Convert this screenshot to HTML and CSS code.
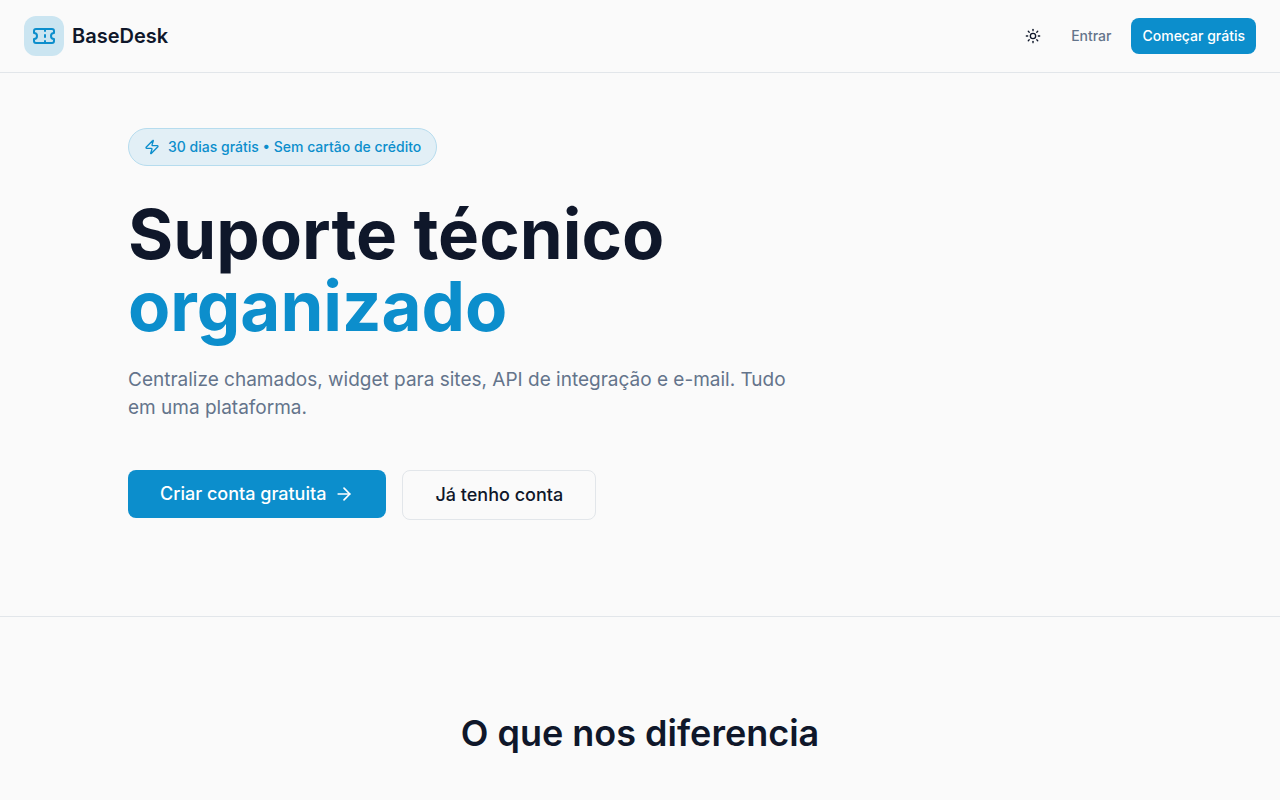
FILE: index.html
```html
<!DOCTYPE html>
<html lang="pt-BR">
<head>
<meta charset="utf-8">
<meta name="viewport" content="width=device-width, initial-scale=1">
<title>BaseDesk</title>
<link rel="stylesheet" href="styles.css">
</head>
<body>
<header class="site-header">
  <a class="brand" href="#">
    <span class="brand-mark">
      <svg class="icon icon-lg" viewBox="0 0 24 24" aria-hidden="true"><path d="M2 9a3 3 0 0 1 0 6v2a2 2 0 0 0 2 2h16a2 2 0 0 0 2-2v-2a3 3 0 0 1 0-6V7a2 2 0 0 0-2-2H4a2 2 0 0 0-2 2Z"/><path d="M13 5v2"/><path d="M13 17v2"/><path d="M13 11v2"/></svg>
    </span>
    <span class="brand-name">BaseDesk</span>
  </a>
  <nav class="site-nav">
    <button class="icon-button" type="button" aria-label="Alternar tema">
      <svg class="icon icon-sm" viewBox="0 0 24 24" aria-hidden="true"><circle cx="12" cy="12" r="4"/><path d="M12 2v2"/><path d="M12 20v2"/><path d="m4.93 4.93 1.41 1.41"/><path d="m17.66 17.66 1.41 1.41"/><path d="M2 12h2"/><path d="M20 12h2"/><path d="m6.34 17.66-1.41 1.41"/><path d="m19.07 4.93-1.41 1.41"/></svg>
    </button>
    <a class="nav-link" href="#">Entrar</a>
    <a class="nav-link nav-cta" href="#">Começar grátis</a>
  </nav>
</header>
<main>
  <section class="hero">
    <div class="container">
      <div class="badge">
        <svg class="icon icon-sm" viewBox="0 0 24 24" aria-hidden="true"><path d="M4 14a1 1 0 0 1-.78-1.63l9.9-10.2a.5.5 0 0 1 .86.46l-1.92 6.02A1 1 0 0 0 13 10h7a1 1 0 0 1 .78 1.63l-9.9 10.2a.5.5 0 0 1-.86-.46l1.92-6.02A1 1 0 0 0 11 14z"/></svg>
        <span>30 dias grátis • Sem cartão de crédito</span>
      </div>
      <h1 class="hero-title">Suporte técnico <span class="accent">organizado</span></h1>
      <p class="hero-text">Centralize chamados, widget para sites, API de integração e e-mail. Tudo em uma plataforma.</p>
      <div class="actions">
        <a class="button button-primary" href="#">Criar conta gratuita
          <svg class="icon icon-md" viewBox="0 0 24 24" aria-hidden="true"><path d="M5 12h14"/><path d="m12 5 7 7-7 7"/></svg>
        </a>
        <a class="button button-outline" href="#">Já tenho conta</a>
      </div>
    </div>
  </section>
  <section class="features">
    <h2 class="section-title">O que nos diferencia</h2>
  </section>
</main>
</body>
</html>
```
FILE: styles.css
```css
:root {
  --background: #fafafa;
  --ink: #0f172a;
  --muted: #64748b;
  --line: #e2e6ea;
  --primary: #0c8ecc;
}

* { box-sizing: border-box; }

body {
  margin: 0;
  background: var(--background);
  color: var(--ink);
  font-family: Inter, "Liberation Sans", sans-serif;
}

a { color: inherit; text-decoration: none; }

.icon {
  flex: none;
  fill: none;
  stroke: currentColor;
  stroke-width: 2;
  stroke-linecap: round;
  stroke-linejoin: round;
}
.icon-sm { width: 16px; height: 16px; }
.icon-md { width: 20px; height: 20px; }
.icon-lg { width: 24px; height: 24px; }

.site-header {
  display: flex;
  align-items: center;
  justify-content: space-between;
  padding: 16px 24px;
  border-bottom: 1px solid var(--line);
}

.brand { display: flex; align-items: center; gap: 8px; }
.brand-mark {
  display: grid;
  place-items: center;
  width: 40px;
  height: 40px;
  border-radius: 12px;
  background: #cbe5f1;
  color: var(--primary);
}
.brand-name { font-size: 20px; line-height: 28px; font-weight: 600; }

.site-nav { display: flex; align-items: center; gap: 9px; }
.icon-button {
  display: grid;
  place-items: center;
  width: 36px;
  height: 36px;
  padding: 0;
  border: 0;
  border-radius: 8px;
  background: none;
  color: var(--ink);
}
.nav-link {
  padding: 8px 11px;
  border-radius: 8px;
  color: var(--muted);
  font-size: 14px;
  line-height: 20px;
  font-weight: 500;
}
.nav-cta { background: var(--primary); color: #fff; }

.hero {
  padding: 55px 24px 96px;
  border-bottom: 1px solid var(--line);
}
.container { max-width: 1024px; margin: 0 auto; }

.badge {
  display: inline-flex;
  align-items: center;
  gap: 8px;
  padding: 8px 15px;
  border: 1px solid #b6dcee;
  border-radius: 20px;
  background: #e2eff6;
  color: var(--primary);
  font-size: 14px;
  line-height: 20px;
  font-weight: 500;
}

.hero-title {
  max-width: 768px;
  margin: 32px 0 24px;
  font-size: 69px;
  line-height: 72px;
  font-weight: 700;
}
.accent { display: block; color: var(--primary); }

.hero-text {
  max-width: 672px;
  margin: 0 0 48px;
  color: var(--muted);
  font-size: 19px;
  line-height: 28px;
}

.actions { display: flex; flex-wrap: wrap; align-items: flex-start; gap: 16px; }
.button {
  display: inline-flex;
  align-items: center;
  gap: 8px;
  padding: 10px 32px;
  border-radius: 8px;
  font-size: 18px;
  line-height: 28px;
  font-weight: 500;
}
.button-primary { background: var(--primary); color: #fff; }
.button-outline { border: 1px solid var(--line); }

.features { padding: 96px 24px 32px; }
.section-title {
  margin: 0;
  font-size: 36px;
  line-height: 40px;
  font-weight: 600;
  text-align: center;
}
```
